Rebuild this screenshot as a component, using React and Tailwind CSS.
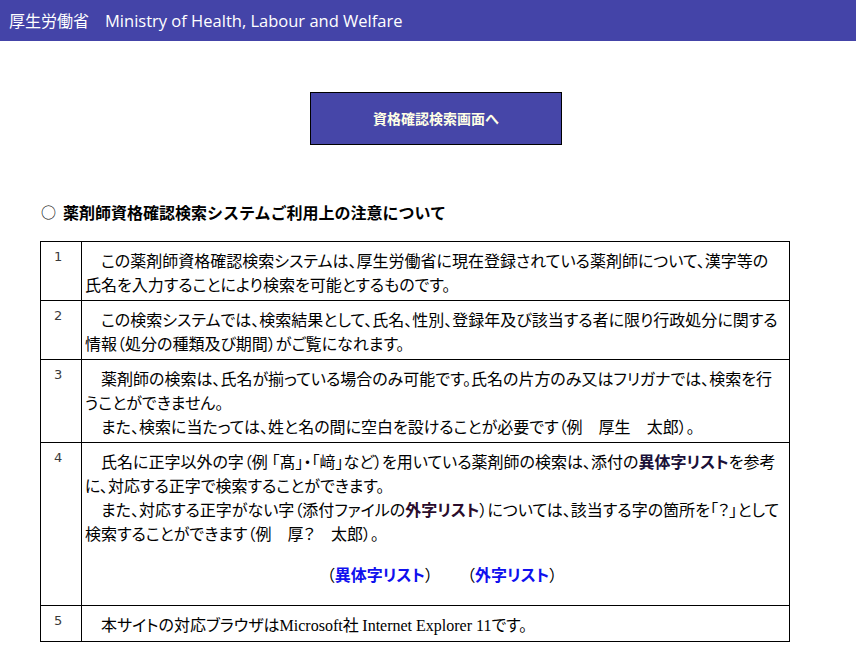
import React from 'react';

const S = '\u3000';

const rows = [
  {
    no: '1',
    h: 'h-[59px]',
    body: (
      <>
        {S}この薬剤師資格確認検索システムは、厚生労働省に現在登録されている薬剤師について、漢字等の<br />
        氏名を入力することにより検索を可能とするものです。
      </>
    ),
  },
  {
    no: '2',
    h: 'h-[59px]',
    body: (
      <>
        {S}この検索システムでは、検索結果として、氏名、性別、登録年及び該当する者に限り行政処分に関する<br />
        情報（処分の種類及び期間）がご覧になれます。
      </>
    ),
  },
  {
    no: '3',
    h: 'h-[83px]',
    body: (
      <>
        {S}薬剤師の検索は、氏名が揃っている場合のみ可能です。氏名の片方のみ又はフリガナでは、検索を行<br />
        うことができません。<br />
        {S}また、検索に当たっては、姓と名の間に空白を設けることが必要です（例{S}厚生{S}太郎）。
      </>
    ),
  },
  {
    no: '4',
    h: 'h-[163px]',
    body: (
      <>
        {S}氏名に正字以外の字（例 「髙」・「<span className="text-black font-['Noto_Sans_CJK_JP','Noto_Sans_CJK_TC','Noto_Sans_CJK_KR',sans-serif]">﨑</span>」など）を用いている薬剤師の検索は、添付の<b className="text-[#1a1038]">異体字リスト</b>を参考<br />
        に、対応する正字で検索することができます。<br />
        {S}また、対応する正字がない字（添付ファイルの<b className="text-[#2a0c2c]">外字リスト</b>）については、該当する字の箇所を「？」として<br />
        検索することができます（例{S}厚？{S}太郎）。
        <div className="flex justify-center gap-[34px] mt-[17px] pl-[12px]">
          <span>
            （<a href="#" className="font-bold text-[#1010ee]">異体字リスト</a>）
          </span>
          <span>
            （<a href="#" className="font-bold text-[#1010ee]">外字リスト</a>）
          </span>
        </div>
      </>
    ),
  },
  {
    no: '5',
    h: 'h-[36px]',
    body: (
      <>
        {S}本サイトの対応ブラウザは
        <span className="font-['Liberation_Serif',serif] text-[16px]">Microsoft</span>社{' '}
        <span className="font-['Liberation_Serif',serif] text-[16px]">Internet Explorer 11</span>です。
      </>
    ),
  },
];

export default function App() {
  return (
    <div className="min-h-[668px] bg-white text-black font-['Noto_Sans_CJK_JP',sans-serif]">
      {/* header bar */}
      <div className="h-[41px] bg-[#4444a8] flex items-center px-[9px]">
        <span className="text-white text-[16px] font-['Noto_Sans_CJK_JP',sans-serif]">
          厚生労働省{S}<span className="font-['Open_Sans',sans-serif] text-[16.5px]">Ministry of Health, Labour and Welfare</span>
        </span>
      </div>

      {/* search button */}
      <div className="flex justify-center pt-[51px] pl-[16px]">
        <button className="w-[252px] h-[53px] bg-[#4646a8] border border-black text-[#ffffe6] text-[14px] font-bold">
          資格確認検索画面へ
        </button>
      </div>

      {/* notes heading */}
      <h2 className="mt-[55px] ml-[41px] text-[16px] leading-[24px] font-bold flex items-center gap-[7px]">
        <span className="font-normal text-[15px]">○</span>
        薬剤師資格確認検索システムご利用上の注意について
      </h2>

      {/* notes table */}
      <table className="ml-[40px] mt-[17px] w-[750px] table-fixed border-collapse border border-black">
        <colgroup>
          <col className="w-[41px]" />
          <col />
        </colgroup>
        <tbody>
          {rows.map((r) => (
            <tr key={r.no} className={r.h}>
              <td className="border border-black align-top pt-[7px] pl-[13px] text-[13px] leading-[16px] text-[#3a3a3a] font-['DejaVu_Sans',sans-serif]">
                {r.no}
              </td>
              <td className="border border-black align-top pt-[6px] pl-[3px] pr-[2px] text-[16px] leading-[24px] [font-feature-settings:'palt'] whitespace-nowrap">
                {r.body}
              </td>
            </tr>
          ))}
        </tbody>
      </table>
    </div>
  );
}
